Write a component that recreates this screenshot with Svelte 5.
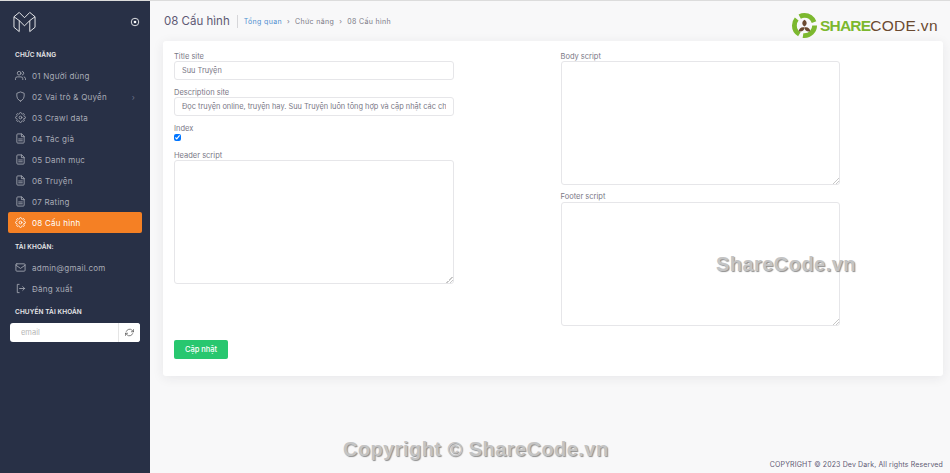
<script>
	const menu = [
		{ label: '01 Người dùng', icon: 'users' },
		{ label: '02 Vai trò & Quyền', icon: 'shield', arrow: true },
		{ label: '03 Crawl data', icon: 'gear' },
		{ label: '04 Tác giả', icon: 'file' },
		{ label: '05 Danh mục', icon: 'file' },
		{ label: '06 Truyện', icon: 'file' },
		{ label: '07 Rating', icon: 'file' },
		{ label: '08 Cấu hình', icon: 'gear', active: true }
	];
	const account = [
		{ label: 'admin@gmail.com', icon: 'mail' },
		{ label: 'Đăng xuất', icon: 'logout' }
	];

	let title = 'Suu Truyện';
	let description = 'Đọc truyện online, truyện hay. Suu Truyện luôn tổng hợp và cập nhật các chương truyện mới nhất';
	let index = true;
</script>

{#snippet icon(name)}
	<svg class="icon" viewBox="0 0 24 24" fill="none" stroke="currentColor" stroke-width="1.8" stroke-linecap="round" stroke-linejoin="round">
		{#if name === 'users'}
			<path d="M17 21v-2a4 4 0 0 0-4-4H5a4 4 0 0 0-4 4v2" /><circle cx="9" cy="7" r="4" /><path d="M23 21v-2a4 4 0 0 0-3-3.9" /><path d="M16 3.1a4 4 0 0 1 0 7.8" />
		{:else if name === 'shield'}
			<path d="M12 22s8-3 8-11V5l-8-3-8 3v6c0 8 8 11 8 11z" />
		{:else if name === 'gear'}
			<circle cx="12" cy="12" r="3" /><path d="M19.4 15a1.65 1.65 0 0 0 .33 1.82l.06.06a2 2 0 0 1 0 2.83 2 2 0 0 1-2.83 0l-.06-.06a1.65 1.65 0 0 0-1.82-.33 1.65 1.65 0 0 0-1 1.51V21a2 2 0 0 1-2 2 2 2 0 0 1-2-2v-.09A1.65 1.65 0 0 0 9 19.4a1.65 1.65 0 0 0-1.82.33l-.06.06a2 2 0 0 1-2.83 0 2 2 0 0 1 0-2.83l.06-.06a1.65 1.65 0 0 0 .33-1.82 1.65 1.65 0 0 0-1.51-1H3a2 2 0 0 1-2-2 2 2 0 0 1 2-2h.09A1.65 1.65 0 0 0 4.6 9a1.65 1.65 0 0 0-.33-1.82l-.06-.06a2 2 0 0 1 0-2.83 2 2 0 0 1 2.83 0l.06.06a1.65 1.65 0 0 0 1.82.33H9a1.65 1.65 0 0 0 1-1.51V3a2 2 0 0 1 2-2 2 2 0 0 1 2 2v.09a1.65 1.65 0 0 0 1 1.51 1.65 1.65 0 0 0 1.82-.33l.06-.06a2 2 0 0 1 2.83 0 2 2 0 0 1 0 2.83l-.06.06a1.65 1.65 0 0 0-.33 1.82V9a1.65 1.65 0 0 0 1.51 1H21a2 2 0 0 1 2 2 2 2 0 0 1-2 2h-.09a1.65 1.65 0 0 0-1.51 1z" />
		{:else if name === 'file'}
			<path d="M14 2H6a2 2 0 0 0-2 2v16a2 2 0 0 0 2 2h12a2 2 0 0 0 2-2V8z" /><path d="M14 2v6h6" /><path d="M8 13h8M8 17h8" />
		{:else if name === 'mail'}
			<rect x="2" y="4" width="20" height="16" rx="2" /><path d="M2 7l10 7 10-7" />
		{:else if name === 'logout'}
			<path d="M9 3H5v18h4" /><path d="M10 12h11M17 8l4 4-4 4" />
		{/if}
	</svg>
{/snippet}

<div class="layout">
	<aside class="sidebar">
		<div class="brand">
			<svg class="logo" viewBox="0 0 24 22" fill="none" stroke="#fff" stroke-width="0.9" stroke-linejoin="round">
				<path d="M1 5.500L6.500 1 12 6.500 17.500 1 23 5.500V16.500L17.500 21V9.500L12 15 6.500 9.500V21L1 16.500z" />
				<path d="M1 5.500L6.500 9.500M23 5.500L17.500 9.500" />
			</svg>
			<svg class="toggle" viewBox="0 0 12 12" fill="none" stroke="#fff" stroke-width="1">
				<circle cx="6" cy="6" r="4.500" /><circle cx="6" cy="6" r="1.600" fill="#fff" stroke="none" />
			</svg>
		</div>

		<div class="section first">CHỨC NĂNG</div>
		<ul>
			{#each menu as item}
				<li class:active={item.active}>
					{@render icon(item.icon)}
					<span>{item.label}</span>
					{#if item.arrow}<em>›</em>{/if}
				</li>
			{/each}
		</ul>

		<div class="section">TÀI KHOẢN:</div>
		<ul>
			{#each account as item}
				<li>
					{@render icon(item.icon)}
					<span>{item.label}</span>
				</li>
			{/each}
		</ul>

		<div class="section last">CHUYỂN TÀI KHOẢN</div>
		<div class="switch">
			<input type="text" placeholder="email" />
			<button aria-label="refresh">
				<svg viewBox="0 0 24 24" fill="none" stroke="#555" stroke-width="2" stroke-linecap="round" stroke-linejoin="round">
					<path d="M23 4v6h-6M1 20v-6h6" /><path d="M3.510 9a9 9 0 0 1 14.850-3.360L23 10M1 14l4.640 4.360A9 9 0 0 0 20.490 15" />
				</svg>
			</button>
		</div>
	</aside>

	<main class="content">
		<header class="topbar">
			<h1>08 Cấu hình</h1>
			<nav>
				<a href="#top">Tổng quan</a>
				<i>›</i><span>Chức năng</span>
				<i>›</i><span>08 Cấu hình</span>
			</nav>
		</header>

		<section class="card">
			<div class="cols">
				<div class="col">
					<label for="title">Title site</label>
					<input id="title" type="text" bind:value={title} />
					<label for="desc">Description site</label>
					<input id="desc" type="text" bind:value={description} />
					<label for="index">Index</label>
					<input id="index" class="check" type="checkbox" bind:checked={index} />
					<label for="header">Header script</label>
					<textarea id="header"></textarea>
				</div>
				<div class="col">
					<label for="body">Body script</label>
					<textarea id="body"></textarea>
					<label class="spaced" for="footer">Footer script</label>
					<textarea id="footer"></textarea>
				</div>
			</div>
			<button class="save">Cập nhật</button>
		</section>

		<footer>COPYRIGHT © 2023 Dev Dark, All rights Reserved</footer>
	</main>

	<!-- brand stamp and watermarks sit over the page -->
	<div class="stamp">
		<svg viewBox="0 0 28 28">
			<circle cx="14" cy="14" r="10.500" fill="none" stroke="#7cb82f" stroke-width="5" stroke-dasharray="18 4" />
			<path d="M14 8c3 2 3 5 0 7-3-2-3-5 0-7zM8 20c0-3 3-5 6-4 0 3-3 5-6 4zM20 20c-3 1-6-1-6-4 3-1 6 1 6 4z" fill="#6b4a30" />
		</svg>
		<span><b>SHARE</b>CODE.vn</span>
	</div>
	<div class="mark mark-mid">ShareCode.vn</div>
	<div class="mark mark-bottom">Copyright © ShareCode.vn</div>
</div>

<style>
	:global(body) {
		font-family: Inter, 'Noto Sans', sans-serif;
		background: #f8f8f9;
	}
	.layout {
		display: flex;
		height: 473px;
		overflow: hidden;
		position: relative;
		border-top: 1px solid #dcdcdc;
		box-sizing: border-box;
	}
	.sidebar {
		width: 150px;
		flex: none;
		background: #283046;
		color: #a9acb6;
		font-size: 8px;
		letter-spacing: 0.25px;
	}
	.brand {
		display: flex;
		align-items: center;
		justify-content: space-between;
		padding: 10px 10.500px 11px 13px;
		height: 22px;
	}
	.logo {
		width: 23px;
		height: 22px;
	}
	.toggle {
		width: 10px;
		height: 10px;
	}
	.section {
		color: #e8e8ea;
		font-size: 6.500px;
		font-weight: 600;
		letter-spacing: 0.1px;
		padding: 10px 0 5px 15px;
		line-height: 9px;
	}
	.section.first {
		padding-top: 7px;
	}
	.section.last {
		padding-top: 9px;
		padding-bottom: 6px;
	}
	ul {
		list-style: none;
		margin: 0;
		padding: 0 8px;
	}
	li {
		display: flex;
		align-items: center;
		gap: 6px;
		height: 21px;
		padding: 0 7px;
		border-radius: 2px;
	}
	li em {
		margin-left: auto;
		font-style: normal;
		color: #6e7488;
	}
	li.active {
		background: #f58024;
		color: #fff;
	}
	.icon {
		width: 11px;
		height: 11px;
		flex: none;
	}
	.switch {
		display: flex;
		margin: 0 10px;
		height: 19px;
		background: #fff;
		border-radius: 3px;
		overflow: hidden;
	}
	.switch input {
		flex: 1;
		min-width: 0;
		border: 0;
		outline: 0;
		padding: 0 0 0 11px;
		font: inherit;
		font-size: 7.500px;
		background: transparent;
	}
	.switch input::placeholder {
		color: #b5b5b5;
	}
	.switch button {
		width: 22px;
		padding: 0 5px;
		border: 0;
		border-left: 1px solid #e5e5e5;
		background: #fff;
	}
	.switch svg {
		width: 9px;
		height: 9px;
		display: block;
		margin: auto;
	}
	.content {
		flex: 1;
		min-width: 0;
		padding: 0 7px 0 13px;
		display: flex;
		flex-direction: column;
		color: #7a7886;
	}
	.topbar {
		display: flex;
		align-items: center;
		height: 40px;
	}
	h1 {
		margin: 0 6px 0 1px;
		padding-right: 7px;
		border-right: 1px solid #d6d6d9;
		font-size: 11.500px;
		font-weight: 400;
		line-height: 13px;
		color: #5e5873;
	}
	nav {
		display: flex;
		align-items: center;
		gap: 5px;
		font-size: 7px;
		letter-spacing: 0.35px;
		color: #7a7886;
	}
	nav a {
		color: #4f8fd0;
		text-decoration: none;
	}
	nav i {
		font-style: normal;
	}
	.card {
		background: #fff;
		border-radius: 3px;
		box-shadow: 0 2px 12px rgba(34, 41, 47, 0.08);
		padding: 11px;
		height: 335px;
		box-sizing: border-box;
	}
	.cols {
		display: grid;
		grid-template-columns: 386.500px 1fr;
		height: 288px;
	}
	.col {
		display: flex;
		flex-direction: column;
		align-items: flex-start;
		width: 279.500px;
	}
	label {
		font-size: 7.500px;
		line-height: 9px;
		margin-top: 8px;
		color: #7a7886;
	}
	label:first-child {
		margin-top: 0;
	}
	label.spaced {
		margin-top: 7px;
		margin-bottom: 1px;
	}
	.col input[type='text'],
	textarea {
		width: 100%;
		box-sizing: border-box;
		border: 1px solid #e6e6e9;
		border-radius: 3px;
		font: inherit;
		font-size: 7.400px;
		color: #7a7886;
		outline: 0;
		background: #fff;
	}
	.col input[type='text'] {
		height: 19px;
		padding: 0 7px;
	}
	textarea {
		height: 124px;
		display: block;
		padding: 4px 7px;
	}
	textarea::-webkit-resizer {
		background: linear-gradient(135deg, transparent 0 50%, #c8c8c8 50% 60%, transparent 60% 72%, #c8c8c8 72% 82%, transparent 82%) no-repeat right bottom / 7px 7px;
	}
	.check {
		width: 7px;
		height: 7px;
		margin: 1px 0 2px;
	}
	.save {
		display: block;
		width: 54px;
		height: 19px;
		padding: 0;
		border: 0;
		border-radius: 2px;
		background: #28c76f;
		color: #fff;
		font: inherit;
		font-size: 7.500px;
		font-weight: 500;
	}
	footer {
		margin-top: auto;
		padding-bottom: 4px;
		text-align: right;
		font-size: 7px;
		letter-spacing: 0.13px;
		line-height: 9px;
		color: #5e5873;
	}
	.stamp {
		position: absolute;
		top: 11px;
		left: 791px;
		display: flex;
		align-items: center;
		gap: 2px;
		color: #6b4a30;
		font-size: 15.500px;
		font-family: 'Liberation Sans', sans-serif;
		letter-spacing: 0.3px;
	}
	.stamp svg {
		width: 27px;
		height: 27px;
	}
	.stamp b {
		color: #7cb82f;
		letter-spacing: -0.8px;
	}
	.mark {
		position: absolute;
		font-family: 'Liberation Sans', sans-serif;
		font-weight: 700;
		font-size: 20px;
		letter-spacing: 0.45px;
		color: #c4c4c4;
		text-shadow: 1px 1px 1px #8f8f8f;
		white-space: nowrap;
	}
	.mark-mid {
		left: 716px;
		top: 252px;
	}
	.mark-bottom {
		left: 343px;
		top: 437px;
	}
</style>
